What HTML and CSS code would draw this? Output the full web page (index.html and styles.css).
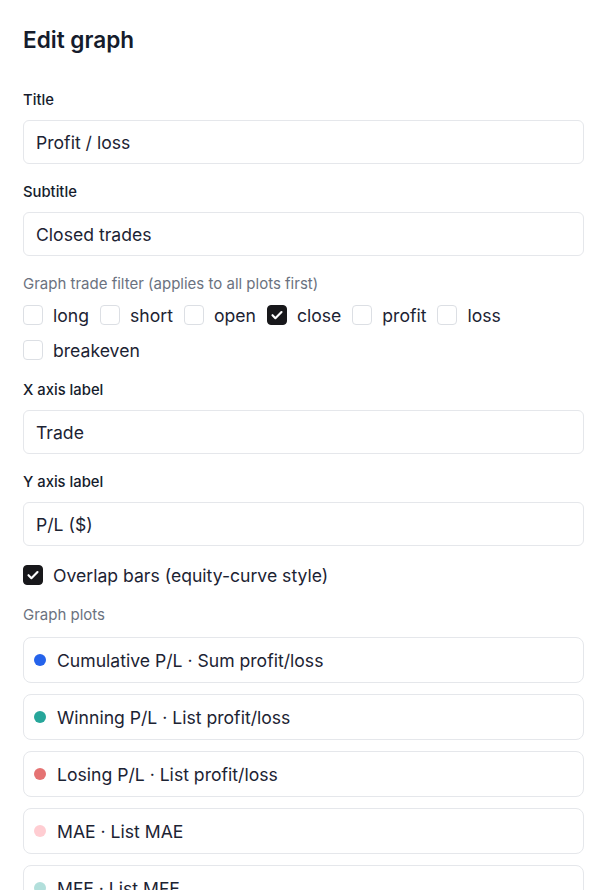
FILE: index.html
```html
<!DOCTYPE html>
<html lang="en">
<head>
<meta charset="utf-8">
<title>Edit graph</title>
<link rel="stylesheet" href="styles.css">
</head>
<body>
<div class="page">
  <h2 class="heading">Edit graph</h2>
  <div class="form">
    <div class="field">
      <label class="label">Title</label>
      <div class="input">Profit / loss</div>
    </div>
    <div class="field">
      <label class="label">Subtitle</label>
      <div class="input">Closed trades</div>
    </div>
    <div class="field">
      <div class="hint filter-hint">Graph trade filter (applies to all plots first)</div>
      <div class="checks">
        <span class="check"><span class="box"></span>long</span>
        <span class="check"><span class="box"></span>short</span>
        <span class="check"><span class="box"></span>open</span>
        <span class="check"><span class="box on"><svg viewBox="0 0 20 20"><path d="M5 10.3l3.2 3.2L15 6.7"/></svg></span>close</span>
        <span class="check"><span class="box"></span>profit</span>
        <span class="check"><span class="box"></span>loss</span>
        <span class="check"><span class="box"></span>breakeven</span>
      </div>
    </div>
    <div class="field">
      <label class="label">X axis label</label>
      <div class="input">Trade</div>
    </div>
    <div class="field">
      <label class="label">Y axis label</label>
      <div class="input">P/L ($)</div>
    </div>
    <div class="field overlap">
      <span class="check"><span class="box on"><svg viewBox="0 0 20 20"><path d="M5 10.3l3.2 3.2L15 6.7"/></svg></span>Overlap bars (equity-curve style)</span>
    </div>
    <div class="field plots-field">
      <div class="hint plots-hint">Graph plots</div>
      <div class="plots">
        <div class="plot"><span class="dot dot-blue"></span>Cumulative P/L · Sum profit/loss</div>
        <div class="plot"><span class="dot dot-teal"></span>Winning P/L · List profit/loss</div>
        <div class="plot"><span class="dot dot-red"></span>Losing P/L · List profit/loss</div>
        <div class="plot"><span class="dot dot-pink"></span>MAE · List MAE</div>
        <div class="plot"><span class="dot dot-mint"></span>MFE · List MFE</div>
      </div>
    </div>
  </div>
</div>
</body>
</html>
```
FILE: styles.css
```css
* { box-sizing: border-box; }
html, body { margin: 0; padding: 0; background: #ffffff; }
body {
  font-family: Inter, "Noto Sans", "Liberation Sans", sans-serif;
  color: #151c2c;
}
.page {
  padding: 26px 23px 40px 23px;
  width: 607px;
}
.heading {
  margin: 0 0 36px 0;
  font-size: 22.6px;
  line-height: 28px;
  font-weight: 600;
  color: #151c2c;
}
.form {
  display: flex;
  flex-direction: column;
  gap: 18px;
}
.field { display: flex; flex-direction: column; }
.label {
  display: block;
  font-size: 14.8px;
  line-height: 20px;
  font-weight: 500;
  color: #151c2c;
  margin-bottom: 10px;
}
.input {
  height: 44px;
  border: 1px solid #e5e7eb;
  border-radius: 6px;
  padding: 0 12px;
  display: flex;
  align-items: center;
  font-size: 17.6px;
  color: #1c2333;
}
.hint {
  font-size: 15px;
  line-height: 20px;
  color: #6b7280;
}
.filter-hint { margin-bottom: 9px; }
.checks {
  display: flex;
  flex-wrap: wrap;
  gap: 11px 11px;
}
.check {
  display: inline-flex;
  align-items: center;
  gap: 10px;
  height: 24px;
  font-size: 17.6px;
  color: #1c2333;
}
.box {
  width: 20px;
  height: 20px;
  border: 1px solid #dcdfe4;
  border-radius: 4px;
  background: #ffffff;
  flex: none;
  display: inline-flex;
  align-items: center;
  justify-content: center;
}
.box.on {
  background: #18181b;
  border-color: #18181b;
}
.box svg {
  width: 20px;
  height: 20px;
  fill: none;
  stroke: #ffffff;
  stroke-width: 2.4;
  stroke-linecap: round;
  stroke-linejoin: round;
}
.overlap { margin-top: -1px; }
.plots-field { margin-top: 0; }
.plots-hint { margin-bottom: 12px; }
.plots {
  display: flex;
  flex-direction: column;
  gap: 11px;
}
.plot {
  height: 46px;
  border: 1px solid #e5e7eb;
  border-radius: 8px;
  padding: 0 10px;
  display: flex;
  align-items: center;
  gap: 11px;
  font-size: 17.6px;
  color: #1c2333;
}
.dot {
  width: 12px;
  height: 12px;
  border-radius: 50%;
  flex: none;
}
.dot-blue { background: #2563eb; }
.dot-teal { background: #26a69a; }
.dot-red { background: #e57373; }
.dot-pink { background: #ffcdd2; }
.dot-mint { background: #b2dfdb; }
```
